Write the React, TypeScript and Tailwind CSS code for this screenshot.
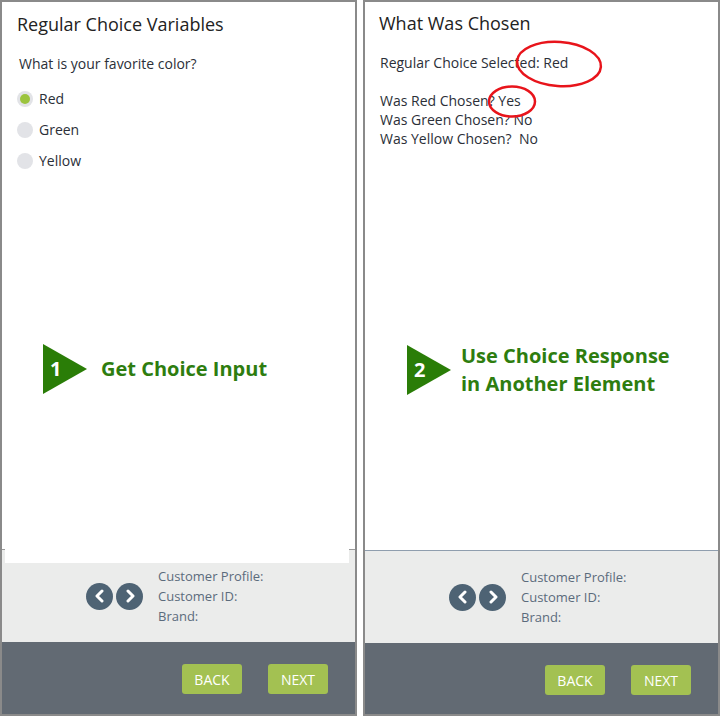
import type { ReactNode } from "react";

const FONT = { fontFamily: '"Open Sans", "Noto Sans", sans-serif' };

function Chevron({ dir }: { dir: "left" | "right" }) {
  return (
    <span className="flex h-[27px] w-[27px] items-center justify-center rounded-full bg-[#4e6374]">
      <svg width="12" height="14" viewBox="0 0 12 14" fill="none">
        <polyline
          points={dir === "left" ? "8,2 3,7 8,12" : "4,2 9,7 4,12"}
          stroke="white"
          strokeWidth="3"
          strokeLinecap="round"
          strokeLinejoin="round"
        />
      </svg>
    </span>
  );
}

function Step({ n, gap, children }: { n: string; gap: string; children: ReactNode }) {
  return (
    <div className="flex items-center">
      <div className="relative h-[50px] w-[44px]">
        <svg width="44" height="50" viewBox="0 0 44 50" className="absolute inset-0">
          <polygon points="0,0 44,25 0,50" fill="#2a7d07" />
        </svg>
        <span className="absolute left-[7px] top-[11px] text-[20px] font-bold leading-[28px] text-white">
          {n}
        </span>
      </div>
      <div className={`${gap} text-[20px] font-bold leading-[28px] text-[#2e7d0f]`}>{children}</div>
    </div>
  );
}

function Footer({ cutout, lineColor }: { cutout?: boolean; lineColor: string }) {
  return (
    <>
      <div className={`relative flex h-[93px] items-center border-t bg-[#ebeceb] ${lineColor}`}>
        {cutout && <div className="absolute -top-px left-[3px] right-[6px] h-[14px] bg-white" />}
        <div className="flex items-center pl-[84px]">
          <div className="flex gap-[3px]">
            <Chevron dir="left" />
            <Chevron dir="right" />
          </div>
          <div className="ml-[15px] text-[13px] leading-[20px] text-[#5b6b7c]">
            <div>Customer Profile:</div>
            <div>Customer ID:</div>
            <div>Brand:</div>
          </div>
        </div>
      </div>
      <div className="flex flex-1 justify-end gap-[26px] bg-[#626a73] pr-[27px] pt-[22px]">
        <button type="button" className="h-[30px] w-[60px] rounded-[3px] bg-[#a3c152] text-[14px] text-white">
          BACK
        </button>
        <button type="button" className="h-[30px] w-[60px] rounded-[3px] bg-[#a3c152] text-[14px] text-white">
          NEXT
        </button>
      </div>
    </>
  );
}

export default function App() {
  return (
    <div className="flex h-[716px] w-[720px] gap-[6px] bg-white" style={FONT}>
      {/* left panel: the choice */}
      <div className="flex w-[357px] flex-col border-2 border-[#8a8a8a]">
        <div className="h-[547px] px-[15px] pt-[10px]">
          <h1 className="text-[18px] leading-[24px] text-[#222]">Regular Choice Variables</h1>
          <p className="mt-[18px] pl-[2px] text-[14px] leading-[20px] text-[#2b2f38]">What is your favorite color?</p>
          <div className="mt-[9px]">
            {["Red", "Green", "Yellow"].map((c, i) => (
              <div key={c} className="flex h-[31px] items-center">
                <span className="flex h-[16px] w-[16px] items-center justify-center rounded-full bg-[#e2e3e7]">
                  {i === 0 && <span className="h-[10px] w-[10px] rounded-full bg-[#9cc43e]" />}
                </span>
                <span className="ml-[6px] text-[14px] text-[#2b2f38]">{c}</span>
              </div>
            ))}
          </div>
          <div className="mt-[168px] pl-[26px]">
            <Step n="1" gap="ml-[14px]">Get Choice Input</Step>
          </div>
        </div>
        <Footer cutout lineColor="border-[#9a9a9a]" />
      </div>

      {/* right panel: what was chosen */}
      <div className="relative flex w-[357px] flex-col border-2 border-[#8a8a8a]">
        <div className="h-[548px] px-[14px] pt-[9px]">
          <h1 className="text-[18px] leading-[24px] text-[#222]">What Was Chosen</h1>
          <div className="mt-[18px] pl-[1px] text-[14px] leading-[19px] text-[#2b2f38]">
            <div>Regular Choice Selected: Red</div>
            <div className="mt-[19px]">Was Red Chosen? Yes</div>
            <div>Was Green Chosen? No</div>
            <div>Was Yellow Chosen?&nbsp; No</div>
          </div>
          <div className="mt-[194px] pl-[28px]">
            <Step n="2" gap="ml-[10px]">
              <div>Use Choice Response</div>
              <div>in Another Element</div>
            </Step>
          </div>
        </div>
        <Footer lineColor="border-[#8f9eae]" />
        <svg className="pointer-events-none absolute left-0 top-0" width="357" height="130">
          <ellipse cx="194" cy="62" rx="42" ry="22" fill="none" stroke="#e8141b" strokeWidth="2.5" transform="rotate(4 194 62)" />
          <ellipse cx="147" cy="99.5" rx="23" ry="15" fill="none" stroke="#e8141b" strokeWidth="2.5" />
        </svg>
      </div>
    </div>
  );
}
